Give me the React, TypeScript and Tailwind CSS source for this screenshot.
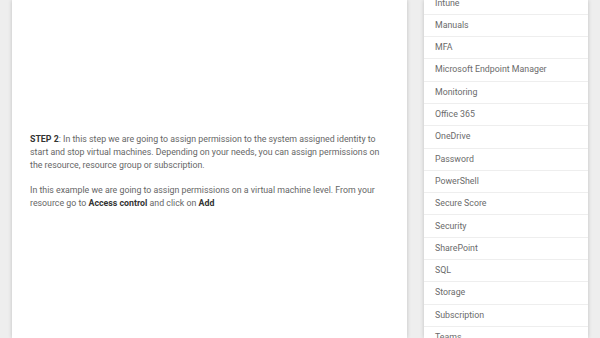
import React from 'react';

const CATEGORIES = [
  'Intune',
  'Manuals',
  'MFA',
  'Microsoft Endpoint Manager',
  'Monitoring',
  'Office 365',
  'OneDrive',
  'Password',
  'PowerShell',
  'Secure Score',
  'Security',
  'SharePoint',
  'SQL',
  'Storage',
  'Subscription',
  'Teams',
];

const App: React.FC = () => {
  return (
    <div
      className="h-[338px] w-[600px] overflow-hidden bg-[#eeeeee]"
      style={{ fontFamily: 'Roboto, "Liberation Sans", sans-serif' }}
    >
      <div className="flex gap-[17px] pl-[12px]">
        {/* Article */}
        <div className="h-[338px] w-[395px] shrink-0 bg-white px-[18px] pt-[132.5px] shadow-[0_0_4px_rgba(0,0,0,0.2)]">
          <p className="text-[8.8px] leading-[13.3px] text-[#666666]">
            <strong className="font-bold text-[#333333]">STEP 2</strong>: In this step we are going to assign permission to the system
            assigned identity to start and stop virtual machines. Depending on your needs, you can assign permissions on the resource,
            resource group or subscription.
          </p>
          <p className="mt-[11.7px] text-[8.8px] leading-[13.3px] text-[#666666]">
            In this example we are going to assign permissions on a virtual machine level. From your resource go to{' '}
            <strong className="font-bold text-[#333333]">Access control</strong> and click on{' '}
            <strong className="font-bold text-[#333333]">Add</strong>
          </p>
        </div>

        {/* Sidebar */}
        <div className="h-[338px] w-[164px] shrink-0 bg-white shadow-[0_0_4px_rgba(0,0,0,0.2)]">
          <ul className="-mt-[7.5px]">
            {CATEGORIES.map((cat) => (
              <li
                key={cat}
                className="flex h-[22.3px] items-center border-b border-[#eeeeee] px-[11px] text-[8.8px] text-[#6b6b6b]"
              >
                {cat}
              </li>
            ))}
          </ul>
        </div>
      </div>
    </div>
  );
};

export default App;
